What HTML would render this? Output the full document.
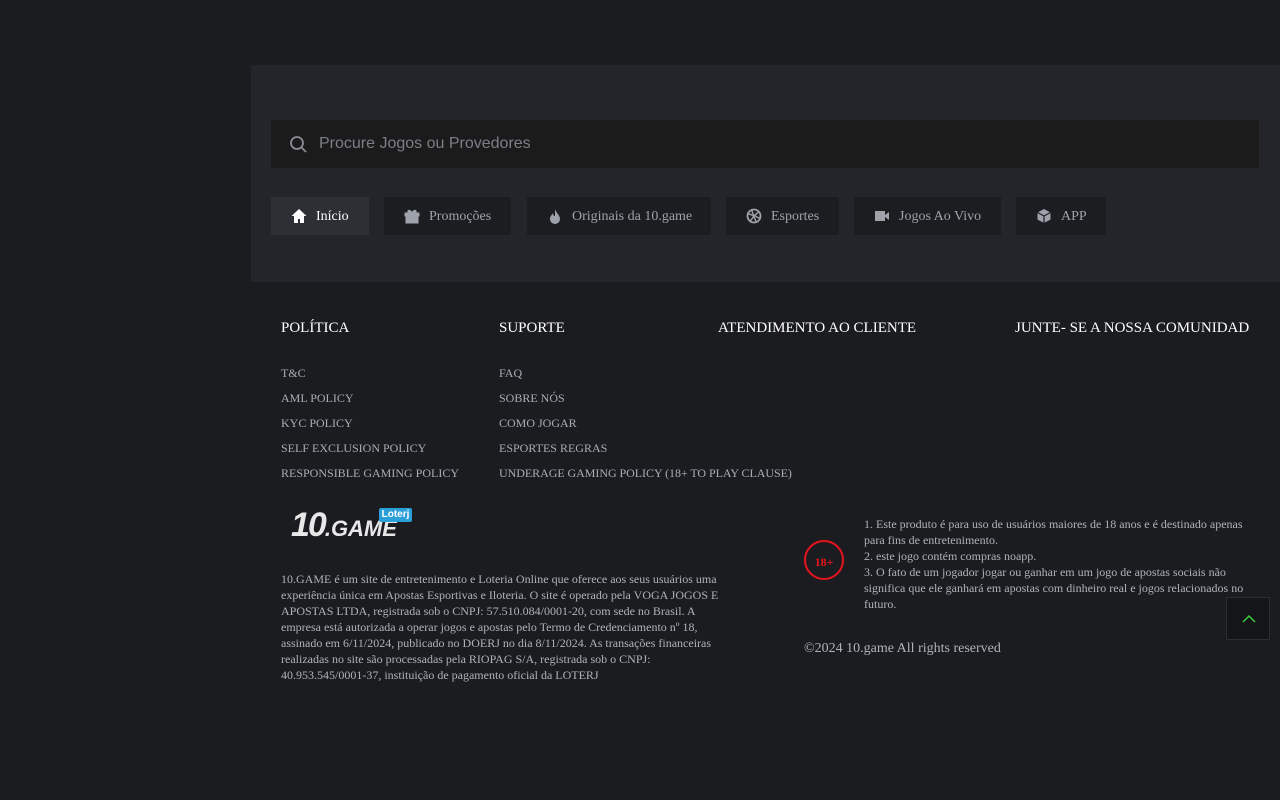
<!DOCTYPE html>
<html><head><meta charset="utf-8"><style>
*{margin:0;padding:0;box-sizing:border-box}
body{width:1280px;height:800px;background:#1b1c20;font-family:"Liberation Serif",serif;color:#aeb2bb;position:relative;overflow:hidden}
.panel{position:absolute;left:251px;top:65px;width:1029px;height:217px;background:#23252a}
.search{position:absolute;left:20px;top:55px;width:988px;height:48px;background:#1b1b1c;border-radius:2px}
.search span{position:absolute;left:48px;top:15px;font-family:"Liberation Sans",sans-serif;font-size:16px;color:#7c7f86}
.search svg{position:absolute;left:19px;top:16px}
.btn{position:absolute;top:132px;height:38px;background:#1c1d21;display:flex;align-items:center;font-size:14px;color:#9ea2aa;padding-left:20px;padding-top:2px;gap:9px}
.btn.act{background:#2d2f34;color:#fff}
.btn svg{width:16px;height:16px;fill:currentColor;margin-top:-2px}
.h{position:absolute;top:320px;font-size:15px;color:#fff}
.l{position:absolute;font-size:12px;color:#a9adb6}
.p{position:absolute;font-size:12px;line-height:16px;color:#aeb2bb}
</style></head><body>
<div class="panel">
<div class="search"><svg width="17" height="17" viewBox="0 0 17 17"><circle cx="7" cy="7" r="6" fill="none" stroke="#8a8d94" stroke-width="1.8"/><path d="M11.5 11.5L16 16" stroke="#8a8d94" stroke-width="1.8"/></svg><span>Procure Jogos ou Provedores</span></div>
<div class="btn act" style="left:20px;width:98px"><svg viewBox="0 0 16 16"><path d="M8 1L0.5 8H3v7h4v-4h2v4h4V8h2.5z"/></svg>Início</div>
<div class="btn" style="left:133px;width:127px"><svg viewBox="0 0 16 16"><path d="M1 5h14v3H1zM2 9h12v6H2zM7 5h2v10H7zM8 5C6 1 3 2 4 4.5M8 5c2-4 5-3 4-0.5" stroke="currentColor" fill="currentColor"/></svg>Promoções</div>
<div class="btn" style="left:276px;width:184px"><svg viewBox="0 0 16 16"><path d="M8 1C9 5 13 7 13 11a5 5 0 0 1-10 0c0-3 2-4 3-6 0 2 1 3 2 3 0-2 0-4 0-7z"/></svg>Originais da 10.game</div>
<div class="btn" style="left:475px;width:113px"><svg viewBox="0 0 16 16"><circle cx="8" cy="8" r="6.5" fill="none" stroke="currentColor" stroke-width="1.8"/><path d="M2 6c4 0 7 3 8 8M6 2c0 4 3 7 8 8M4 13L13 3" fill="none" stroke="currentColor" stroke-width="1.5"/></svg>Esportes</div>
<div class="btn" style="left:603px;width:147px"><svg viewBox="0 0 16 16"><path d="M1 3h10v10H1zM11 7l4-3v8l-4-3z"/></svg>Jogos Ao Vivo</div>
<div class="btn" style="left:765px;width:90px"><svg viewBox="0 0 16 16"><path d="M8 1l6.5 3.5v7L8 15l-6.5-3.5v-7z"/><path d="M1.5 4.5L8 8l6.5-3.5M8 8v7" stroke="#1c1d21" stroke-width="1.2" fill="none"/></svg>APP</div>
</div>

<div class="h" style="left:281px">POLÍTICA</div>
<div class="h" style="left:499px">SUPORTE</div>
<div class="h" style="left:718px">ATENDIMENTO AO CLIENTE</div>
<div class="h" style="left:1015px">JUNTE- SE A NOSSA COMUNIDAD</div>

<div class="l" style="left:281px;top:366px">T&amp;C</div>
<div class="l" style="left:281px;top:391px">AML POLICY</div>
<div class="l" style="left:281px;top:416px">KYC POLICY</div>
<div class="l" style="left:281px;top:441px">SELF EXCLUSION POLICY</div>
<div class="l" style="left:281px;top:466px">RESPONSIBLE GAMING POLICY</div>
<div class="l" style="left:499px;top:366px">FAQ</div>
<div class="l" style="left:499px;top:391px">SOBRE NÓS</div>
<div class="l" style="left:499px;top:416px">COMO JOGAR</div>
<div class="l" style="left:499px;top:441px">ESPORTES REGRAS</div>
<div class="l" style="left:499px;top:466px;letter-spacing:-0.05px">UNDERAGE GAMING POLICY (18+ TO PLAY CLAUSE)</div>

<div style="position:absolute;left:291px;top:507px;font-family:'Liberation Sans',sans-serif;font-weight:bold;font-style:italic;color:#e8e8e8;font-size:34px;letter-spacing:-2px;line-height:36px">10<span style="font-size:22px;letter-spacing:0">.GAME</span></div>
<div style="position:absolute;left:379px;top:508px;width:33px;height:14px;background:#2a9fd8;border-radius:2px;color:#fff;font-family:'Liberation Sans',sans-serif;font-weight:bold;font-size:10px;line-height:14px;text-align:center">Loterj</div>

<div class="p" style="left:281px;top:571px;width:445px">10.GAME é um site de entretenimento e Loteria Online que oferece aos seus usuários uma experiência única em Apostas Esportivas e Iloteria. O site é operado pela VOGA JOGOS E APOSTAS LTDA, registrada sob o CNPJ: 57.510.084/0001-20, com sede no Brasil. A empresa está autorizada a operar jogos e apostas pelo Termo de Credenciamento nº 18, assinado em 6/11/2024, publicado no DOERJ no dia 8/11/2024. As transações financeiras realizadas no site são processadas pela RIOPAG S/A, registrada sob o CNPJ: 40.953.545/0001-37, instituição de pagamento oficial da LOTERJ</div>

<div style="position:absolute;left:804px;top:540px;width:40px;height:40px;border:2px solid #e8141c;border-radius:50%;color:#e8141c;font-size:12px;font-weight:bold;text-align:center;line-height:40px">18+</div>
<div class="p" style="left:864px;top:516px;width:390px">1. Este produto é para uso de usuários maiores de 18 anos e é destinado apenas para fins de entretenimento.<br>2. este jogo contém compras noapp.<br>3. O fato de um jogador jogar ou ganhar em um jogo de apostas sociais não significa que ele ganhará em apostas com dinheiro real e jogos relacionados no futuro.</div>
<div style="position:absolute;left:804px;top:641px;font-size:14px;color:#aeb2bb">©2024 10.game All rights reserved</div>

<div style="position:absolute;left:1226px;top:597px;width:44px;height:43px;background:#141518;border:1px solid #2c2e33"><svg width="44" height="43"><path d="M16 24l6-6 6 6" fill="none" stroke="#3fcf3a" stroke-width="1.5"/></svg></div>
</body></html>
